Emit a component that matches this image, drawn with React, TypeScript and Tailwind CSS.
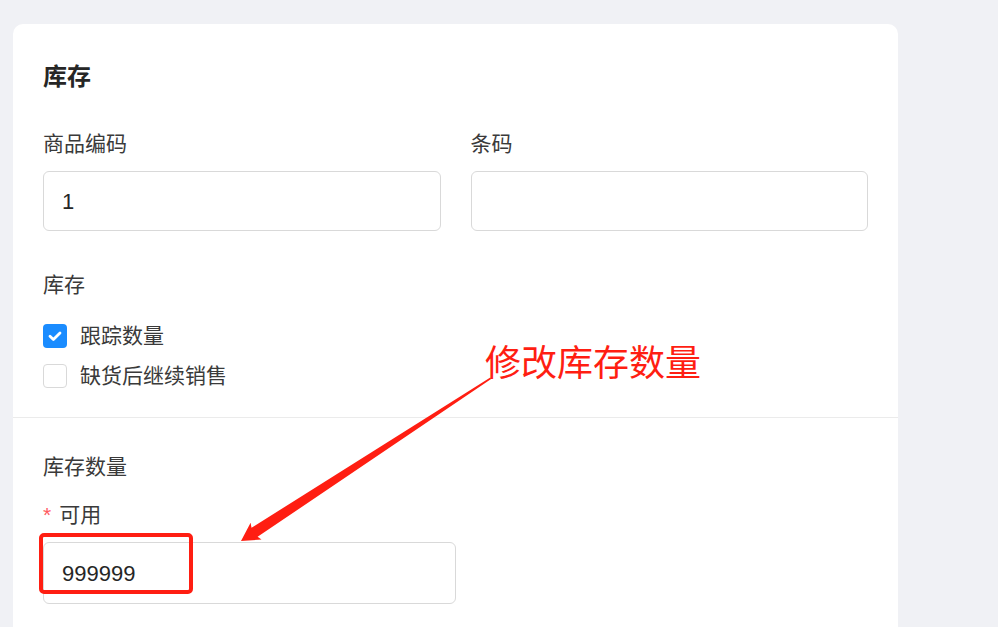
import React from "react";

const FONT = { fontFamily: '"Liberation Sans", "Noto Sans CJK SC", sans-serif' };

function Checkbox({ checked, label }: { checked: boolean; label: string }) {
  return (
    <label className="flex h-[40px] items-center gap-[13px]">
      {checked ? (
        <span className="flex h-[24px] w-[24px] items-center justify-center rounded-[4px] bg-[#1a8cff]">
          <svg width="16" height="16" viewBox="0 0 16 16" fill="none">
            <path d="M3 8.2l3.4 3.3L13 4.9" stroke="#fff" strokeWidth="2.8" strokeLinecap="round" strokeLinejoin="round" />
          </svg>
        </span>
      ) : (
        <span className="h-[24px] w-[24px] rounded-[4px] border border-[#d9d9d9] bg-white" />
      )}
      <span className="text-[21px] leading-[30px] text-[#3a3a3a]">{label}</span>
    </label>
  );
}

function Field({ label, value }: { label: string; value: string }) {
  return (
    <div className="flex flex-col gap-[12px]">
      <div className="text-[21px] leading-[30px] text-[#3a3a3a]">{label}</div>
      <div className="flex h-[60px] items-center rounded-[6px] border border-[#d9d9d9] px-[18px] text-[22px] text-[#262626]">
        {value}
      </div>
    </div>
  );
}

export default function App() {
  return (
    <div className="relative h-[627px] w-[998px] overflow-hidden bg-[#f0f1f5] pl-[13px] pt-[24px]" style={FONT}>
      <div className="w-[885px] rounded-t-[10px] bg-white">
        <div className="px-[30px] pb-[21px] pt-[37px]">
          <h2 className="text-[24px] font-bold leading-[32px] text-[#262626]">库存</h2>
          <div className="mt-[36px] grid grid-cols-2 gap-[30px]">
            <Field label="商品编码" value="1" />
            <Field label="条码" value="" />
          </div>
          <div className="mt-[39px] text-[21px] leading-[30px] text-[#3a3a3a]">库存</div>
          <div className="mt-[16px] flex flex-col">
            <Checkbox checked label="跟踪数量" />
            <Checkbox checked={false} label="缺货后继续销售" />
          </div>
        </div>
        <div className="h-px bg-[#ebebeb]" />
        <div className="px-[30px] pb-[40px] pt-[34px]">
          <div className="text-[21px] leading-[30px] text-[#3a3a3a]">库存数量</div>
          <div className="mt-[18px] flex items-center text-[21px] leading-[30px] text-[#3a3a3a]">
            <span className="mr-[8px] text-[21px] text-[#ff5a5f]">*</span>
            可用
          </div>
          <div className="mt-[12px] flex h-[62px] w-[413px] items-center rounded-[6px] border border-[#d9d9d9] px-[18px] text-[22px] text-[#262626]">
            999999
          </div>
        </div>
      </div>

      {/* annotation overlay */}
      <div className="absolute left-[39px] top-[533px] h-[61px] w-[154px] rounded-[5px] border-[4px] border-[#ff1e12]" />
      <svg className="absolute left-0 top-0" width="998" height="627" viewBox="0 0 998 627">
        <polygon
          points="241,541 250.6,522.8 251.5,527.8 490.3,377.6 491.1,379 257.6,536.8 261.5,539.6"
          fill="#ff1e12"
        />
      </svg>
      <div
        className="absolute left-[485px] top-[342px] text-[36px] leading-[36px] text-[#ff1e12]"
        style={{ fontFamily: '"Noto Sans CJK SC", sans-serif' }}
      >
        修改库存数量
      </div>
    </div>
  );
}
